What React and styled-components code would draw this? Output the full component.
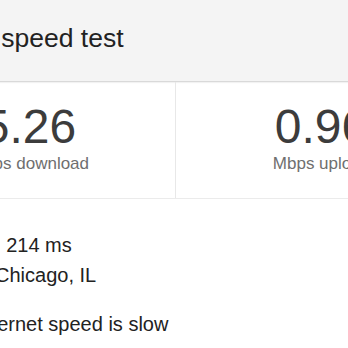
import React from "react";
import styled, { createGlobalStyle } from "styled-components";

const GlobalStyle = createGlobalStyle`
  html, body {
    margin: 0;
    padding: 0;
    background: #ffffff;
    overflow: hidden;
  }
  body {
    font-family: "Liberation Sans", Arial, Helvetica, sans-serif;
  }
`;

const stats = [
  { value: "5.26", label: "Mbps download" },
  { value: "0.96", label: "Mbps upload" },
];

function App() {
  return (
    <>
      <GlobalStyle />
      <Card>
        <Header>
          <Title>Internet speed test</Title>
        </Header>
        <Stats>
          {stats.map((s, i) => (
            <Stat key={s.label} divided={i > 0}>
              <Value>{s.value}</Value>
              <Label>{s.label}</Label>
            </Stat>
          ))}
        </Stats>
        <Details>
          <Line>Latency: 214 ms</Line>
          <Line>Server: Chicago, IL</Line>
          <Verdict>Your Internet speed is slow</Verdict>
        </Details>
      </Card>
    </>
  );
}

export default App;

const Card = styled.div`
  width: 583px;
  margin-left: -116px;
`;

const Header = styled.div`
  box-sizing: border-box;
  height: 82px;
  padding: 23px 0 0 20px;
  background: #f4f4f4;
  border-bottom: 1px solid #d9d9d9;
  box-shadow: 0 1px 1px rgba(0, 0, 0, 0.05);
`;

const Title = styled.div`
  font-size: 26.5px;
  line-height: 30px;
  color: #222222;
`;

const Stats = styled.div`
  display: grid;
  grid-template-columns: 291px 292px;
  border-bottom: 1px solid #ebebeb;
`;

const Stat = styled.div`
  box-sizing: border-box;
  display: flex;
  flex-direction: column;
  align-items: center;
  padding: 19px 0 23px;
  border-left: ${(p) => (p.divided ? "1px solid #e8e8e8" : "none")};
`;

const Value = styled.div`
  font-size: 48px;
  line-height: 52px;
  color: #3c3c3c;
`;

const Label = styled.div`
  font-size: 17px;
  line-height: 22px;
  color: #6f6f6f;
`;

const Details = styled.div`
  padding: 31px 0 0 41px;
  color: #222222;
`;

const Line = styled.div`
  font-size: 20px;
  line-height: 30px;
`;

const Verdict = styled.div`
  font-size: 20px;
  line-height: 30px;
  margin: 19px 0 0 4px;
`;
